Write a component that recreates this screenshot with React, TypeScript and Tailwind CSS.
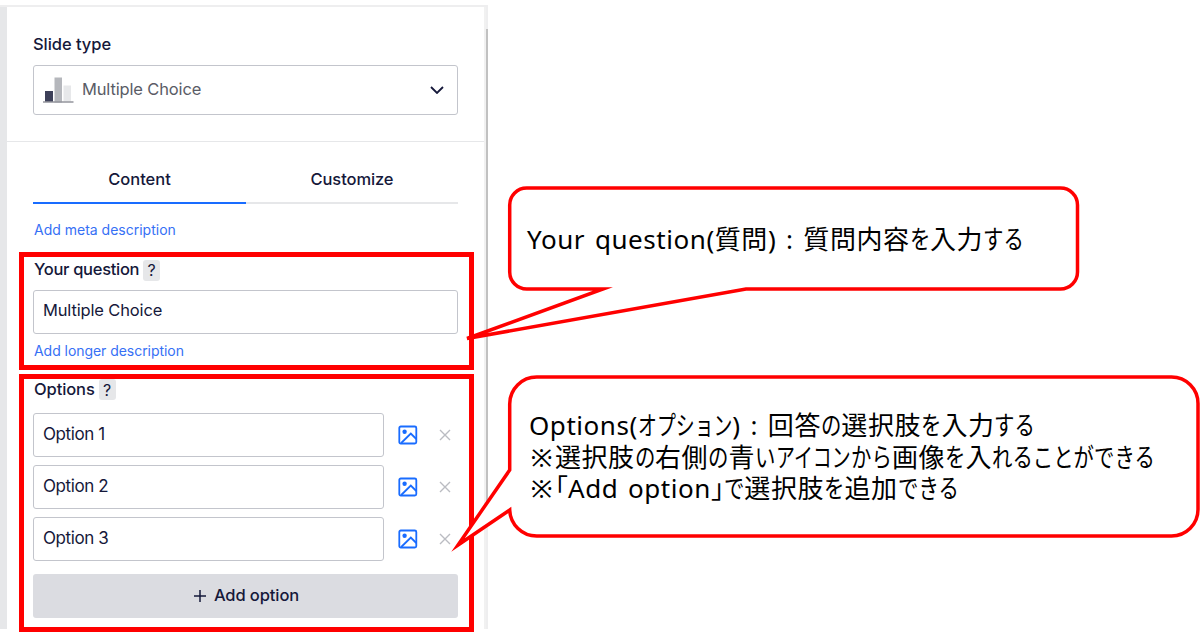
import React from "react";

interface OptionRowProps {
    label: string;
}

interface CalloutTextProps {
    text: string;
}

const SEGMENTS = /([\u3041-\u3096]+|[\u30a1-\u30fc]+|[※「」])/;
const HIRAGANA = /^[\u3041-\u3096]/;
const KATAKANA = /^[\u30a1-\u30fc]/;

// Kana and brackets are set condensed, kanji and latin keep their natural width
const CalloutSegment: React.FC<CalloutTextProps> = ({ text }) => {
    if (HIRAGANA.test(text) || KATAKANA.test(text)) {
        const advance = KATAKANA.test(text) ? 18.9 : 20.4;
        return (
            <span className="flex h-[31px] tracking-normal" style={{ width: text.length * advance }}>
                <span
                    className="block h-[31px] origin-left leading-[31px]"
                    style={{ transform: `scaleX(${advance / 26})` }}
                >
                    {text}
                </span>
            </span>
        );
    }
    if (text === "※") {
        return <span className="flex w-[26px] justify-center">{text}</span>;
    }
    if (text === "「" || text === "」") {
        return <span className="w-[13px] tracking-normal [font-feature-settings:'halt']">{text}</span>;
    }
    return <span>{text}</span>;
};

const CalloutText: React.FC<CalloutTextProps> = ({ text }) => (
    <p className="flex h-[31.5px] items-center whitespace-pre leading-[31px] tracking-[0.55px] [word-spacing:2.5px]">
        {text.split(SEGMENTS).filter(Boolean).map((part, i) => (
            <CalloutSegment key={i} text={part} />
        ))}
    </p>
);

const ChartIcon = () => (
    <svg className="h-[28px] w-[32px]" viewBox="0 0 32 28">
        <rect x="2" y="15" width="8" height="11" fill="#3d4059" />
        <rect x="11.5" y="1.5" width="7.5" height="25" fill="#b5b7bc" />
        <rect x="20.5" y="9.5" width="7.5" height="16" fill="#e7e8ea" />
        <path d="M0 26H30.5" stroke="#93959c" strokeWidth="1.5" />
    </svg>
);

const ImageIcon = () => (
    <svg className="h-5 w-5" viewBox="0 0 20 20" fill="none" stroke="#196cff" strokeWidth="1.8">
        <rect x="1.3" y="1.5" width="17" height="17" rx="1.5" />
        <circle cx="6.6" cy="6.8" r="2.2" fill="#196cff" stroke="none" />
        <path d="M3.2 18L12.8 8.5L18.3 14" />
    </svg>
);

const CloseIcon = () => (
    <svg className="h-3 w-3" viewBox="0 0 12 12" stroke="#babcc2" strokeWidth="1.4">
        <path d="M1 1L11 11M11 1L1 11" />
    </svg>
);

const HelpBadge = () => (
    <span className="flex h-[21px] w-[17px] items-center justify-center rounded-[3px] bg-[#e6e7e9] text-base font-normal leading-5 tracking-normal">
        ?
    </span>
);

const OptionRow: React.FC<OptionRowProps> = ({ label }) => (
    <div className="flex items-center">
        <div className="flex h-11 w-[351px] items-center rounded-[3px] border-[1.5px] border-[#c3c5cc] px-[9px] text-[17px] tracking-[-0.4px]">
            {label}
        </div>
        <span className="ml-[14px]"><ImageIcon /></span>
        <span className="ml-[21px]"><CloseIcon /></span>
    </div>
);

const SlidePanel = () => (
    <aside className="flex h-[624px] w-[488px] border-t-2 border-[#eeeeef] font-['Inter',sans-serif] text-[#15183a]">
        <div className="w-[7px] shrink-0 bg-[#e6e7e9]" />
        <div className="w-[477px] shrink-0">
            <div className="h-[135px] border-b border-[#e6e7e9] pl-[26px] pt-[25px]">
                <h2 className="h-6 text-[16.5px] font-medium leading-6 tracking-[-0.05px]">Slide type</h2>
                <div className="mt-[9px] flex h-[50px] w-[425px] items-center rounded-[3px] border-[1.5px] border-[#c3c5cc] pl-[9px] pr-[13px]">
                    <ChartIcon />
                    <span className="ml-[7px] flex-1 pb-px text-[16.5px] tracking-[-0.15px] text-[#5a5c66]">Multiple Choice</span>
                    <svg className="h-2 w-[14px]" viewBox="0 0 14 8" fill="none" stroke="#15183a" strokeWidth="1.8">
                        <path d="M1 1L7 7L13 1" />
                    </svg>
                </div>
            </div>
            <div className="ml-[26px] flex h-[62px] w-[425px] pt-[23px] text-center text-[16.5px] font-medium leading-6">
                <div className="h-[39px] w-[213px] border-b-2 border-[#196cff] pt-[2px]">Content</div>
                <div className="h-[39px] w-[212px] border-b-2 border-[#e6e7e9] pt-[2px] tracking-[-0.1px]">Customize</div>
            </div>
            <a className="ml-[27px] mt-4 block h-5 text-sm leading-5 text-[#3670f5]">Add meta description</a>
            <div className="ml-3 mt-3 h-[118px] w-[455px] border-5 border-[#ff0000] pl-[9px]">
                <h3 className="flex h-[24px] items-center gap-1 pl-px text-[16.5px] font-medium tracking-[-0.3px]">
                    Your question
                    <span className="pt-[2px]"><HelpBadge /></span>
                </h3>
                <div className="mt-[9px] flex h-11 w-[425px] items-center rounded-[3px] border-[1.5px] border-[#c3c5cc] px-[9px] pb-[3px] text-[16.5px] tracking-[-0.15px]">
                    Multiple Choice
                </div>
                <a className="ml-px mt-[7px] block h-5 text-sm leading-5 tracking-[-0.05px] text-[#3670f5]">Add longer description</a>
            </div>
            <div className="ml-3 mt-1 h-[258px] w-[455px] border-5 border-[#ff0000] pl-[9px]">
                <h3 className="flex h-[22px] items-center gap-1 pb-px pl-px text-[16.5px] font-medium tracking-[-0.1px]">
                    Options
                    <HelpBadge />
                </h3>
                <div className="mt-3 flex flex-col gap-2">
                    <OptionRow label="Option 1" />
                    <OptionRow label="Option 2" />
                    <OptionRow label="Option 3" />
                </div>
                <button className="mt-[13px] flex h-11 w-[425px] items-center justify-center gap-2 rounded-[3px] bg-[#dbdce1] pb-px pl-[2px] text-[16.5px] font-medium tracking-[-0.1px]">
                    <svg className="h-3 w-3" viewBox="0 0 12 12" stroke="#15183a" strokeWidth="1.5">
                        <path d="M6 0V12M0 6H12" />
                    </svg>
                    Add option
                </button>
            </div>
        </div>
        <div className="h-full w-[2px] shrink-0 bg-[#f1f1f1]" />
        <div className="h-full w-[2px] shrink-0 bg-[#eeeeef] pt-[22px]">
            <div className="h-[488px] bg-[#c1c1c1]" />
        </div>
    </aside>
);

export default function App() {
    return (
        <main className="relative h-[632px] w-[1200px] overflow-hidden bg-white pt-[5px]">
            <SlidePanel />
            <svg
                className="absolute left-0 top-0 h-[632px] w-[1200px]"
                viewBox="0 0 1200 632"
                fill="#ffffff"
                stroke="#ff0000"
                strokeWidth="3.5"
                strokeMiterlimit="8"
            >
                <path d="M526.7 188H1060.5A17 17 0 0 1 1077.5 205V272A17 17 0 0 1 1060.5 289H746L467 338.5L603 289H526.7A17 17 0 0 1 509.7 272V205A17 17 0 0 1 526.7 188Z" />
                <path d="M536.7 377H1171.5A26.5 26.5 0 0 1 1198 403.5V509.5A26.5 26.5 0 0 1 1171.5 536H536.7A27 27 0 0 1 509.7 510L458 545L509.7 470V404A27 27 0 0 1 536.7 377Z" />
            </svg>
            <div className="absolute left-[527px] top-[224px] font-['Noto_Sans','Noto_Sans_CJK_JP',sans-serif] text-[26px] text-black">
                <CalloutText text="Your question(質問) : 質問内容を入力する" />
            </div>
            <div className="absolute left-[529px] top-[410px] font-['Noto_Sans','Noto_Sans_CJK_JP',sans-serif] text-[26px] text-black">
                <CalloutText text="Options(オプション) : 回答の選択肢を入力する" />
                <CalloutText text="※選択肢の右側の青いアイコンから画像を入れることができる" />
                <CalloutText text="※「Add option」で選択肢を追加できる" />
            </div>
        </main>
    );
}
